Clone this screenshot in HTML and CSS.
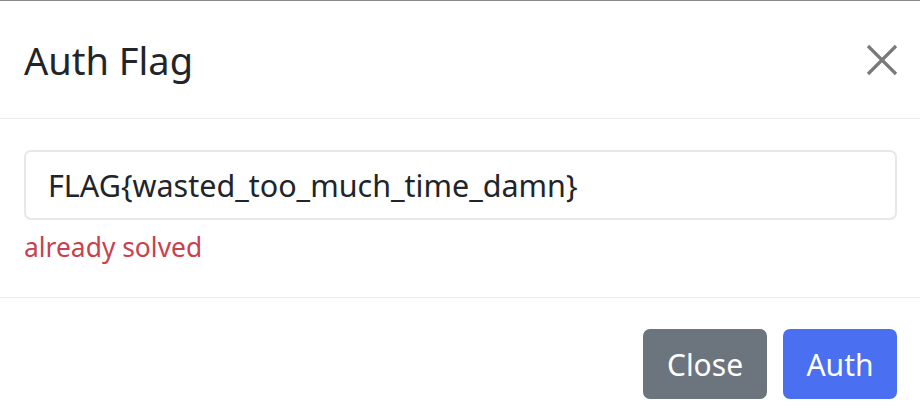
FILE: index.html
```html
<!DOCTYPE html>
<html>
<head>
<meta charset="utf-8">
<link rel="stylesheet" href="styles.css">
</head>
<body>
<div class="modal">
  <div class="modal-header">
    <h5 class="modal-title">Auth Flag</h5>
    <button class="btn-close" aria-label="Close">
      <svg width="32" height="32" viewBox="0 0 32 32"><path d="M2 2L30 30M30 2L2 30" stroke="#7a7a7a" stroke-width="3.2" fill="none"/></svg>
    </button>
  </div>
  <div class="modal-body">
    <div class="form-control">FLAG{wasted_too_much_time_damn}</div>
    <div class="feedback">already solved</div>
  </div>
  <div class="modal-footer">
    <button class="btn btn-secondary">Close</button>
    <button class="btn btn-primary">Auth</button>
  </div>
</div>
</body>
</html>
```
FILE: styles.css
```css
* { box-sizing: border-box; }
html, body { margin: 0; padding: 0; background: #fff; }
body { font-family: "Noto Sans", sans-serif; color: #212529; width: 920px; height: 411px; overflow: hidden; }
.modal { border-top: 1px solid #8a8a8a; }
.modal-header {
  height: 118px;
  display: flex;
  align-items: center;
  justify-content: space-between;
  padding: 0 22px 0 24px;
  border-bottom: 1px solid #e9ecef;
}
.modal-title { margin: 0; font-weight: 400; font-size: 38px; line-height: 1; }
.btn-close { background: none; border: 0; padding: 0; width: 32px; height: 32px; display: flex; }
.modal-body { padding: 31px 23px 0 24px; height: 179px; border-bottom: 1px solid #e9ecef; }
.form-control {
  height: 70px;
  border: 2px solid #e6e8ec;
  border-radius: 7px;
  padding: 0 22px;
  display: flex;
  align-items: center;
  font-size: 30.5px;
  color: #212529;
}
.feedback { margin-top: 11px; font-size: 26.4px; color: #c9414e; line-height: 32px; }
.modal-footer { display: flex; justify-content: flex-end; gap: 16px; padding: 31px 23px 0 24px; }
.btn {
  height: 70px;
  border: 0;
  border-radius: 7px;
  color: #fff;
  font-family: "Noto Sans", sans-serif;
  font-size: 30px;
  padding: 0 22px;
}
.btn-secondary { background: #6c757d; width: 124px; }
.btn-primary { background: #4a6ff0; width: 114px; }
```
